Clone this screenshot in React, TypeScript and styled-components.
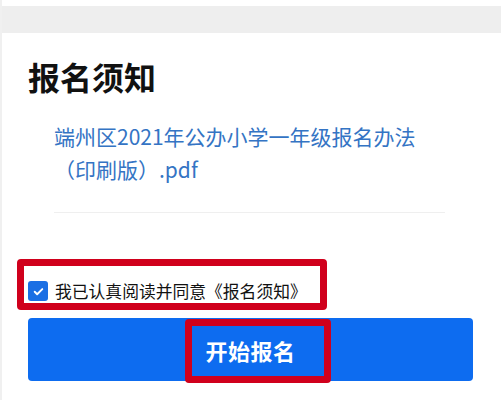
import React from "react";
import styled, { createGlobalStyle } from "styled-components";

const GlobalStyle = createGlobalStyle`
  html, body {
    margin: 0;
    padding: 0;
    background: #fff;
  }
  body {
    font-family: "Noto Sans CJK SC", "Noto Sans", sans-serif;
  }
`;

const Page = styled.div`
  position: relative;
  width: 501px;
  height: 400px;
  overflow: hidden;
  background: #fff;
  border-left: 2px solid #f0f0f0;
  box-sizing: border-box;
  padding-top: 6px;
`;

const TopBar = styled.div`
  height: 27px;
  background: #eeeeee;
`;

const Body = styled.div`
  padding: 0 26px;
  display: flex;
  flex-direction: column;
`;

const Title = styled.h1`
  margin: 23px 0 0;
  font-size: 32px;
  line-height: 40px;
  font-weight: 700;
  color: #111;
`;

const Notice = styled.div`
  margin: 0 30px 0 26px;
  padding: 24px 0 26px;
  border-bottom: 1px solid #efefef;
`;

const FileLink = styled.a`
  display: block;
  color: #3474c4;
  font-size: 21px;
  line-height: 33px;
  text-decoration: none;
`;

const AgreeRow = styled.label`
  display: flex;
  align-items: center;
  gap: 7px;
  margin-top: 68px;
  height: 20px;
  font-size: 16.8px;
  color: #111;
`;

const Check = styled.span`
  width: 20px;
  height: 20px;
  border-radius: 3px;
  background: #1b6fe4;
  display: flex;
  align-items: center;
  justify-content: center;
`;

const StartButton = styled.button`
  margin-top: 17px;
  height: 63px;
  width: 445px;
  border: none;
  border-radius: 4px;
  background: #0d6cf0;
  color: #fff;
  font-family: inherit;
  font-size: 22px;
  font-weight: 700;
  letter-spacing: 0.5px;
`;

const Mark = styled.div<{ $left: number; $top: number; $w: number; $h: number }>`
  position: absolute;
  left: ${(p) => p.$left}px;
  top: ${(p) => p.$top}px;
  width: ${(p) => p.$w}px;
  height: ${(p) => p.$h}px;
  box-sizing: border-box;
  border: 7px solid #d0001c;
  border-radius: 4px;
  pointer-events: none;
`;

export default function App() {
  return (
    <>
      <GlobalStyle />
      <Page>
        <TopBar />
        <Body>
          <Title>报名须知</Title>
          <Notice>
            <FileLink>端州区2021年公办小学一年级报名办法</FileLink>
            <FileLink>（印刷版）.pdf</FileLink>
          </Notice>
          <AgreeRow>
            <Check>
              <svg width="13" height="13" viewBox="0 0 24 24" fill="none" stroke="#fff" strokeWidth="3.5" strokeLinecap="round" strokeLinejoin="round">
                <path d="M5 12.5l4.5 4.5L19 7.5" />
              </svg>
            </Check>
            我已认真阅读并同意《报名须知》
          </AgreeRow>
          <StartButton>开始报名</StartButton>
        </Body>
        <Mark $left={15} $top={259} $w={310} $h={51} />
        <Mark $left={183} $top={319} $w={146} $h={64} />
      </Page>
    </>
  );
}
